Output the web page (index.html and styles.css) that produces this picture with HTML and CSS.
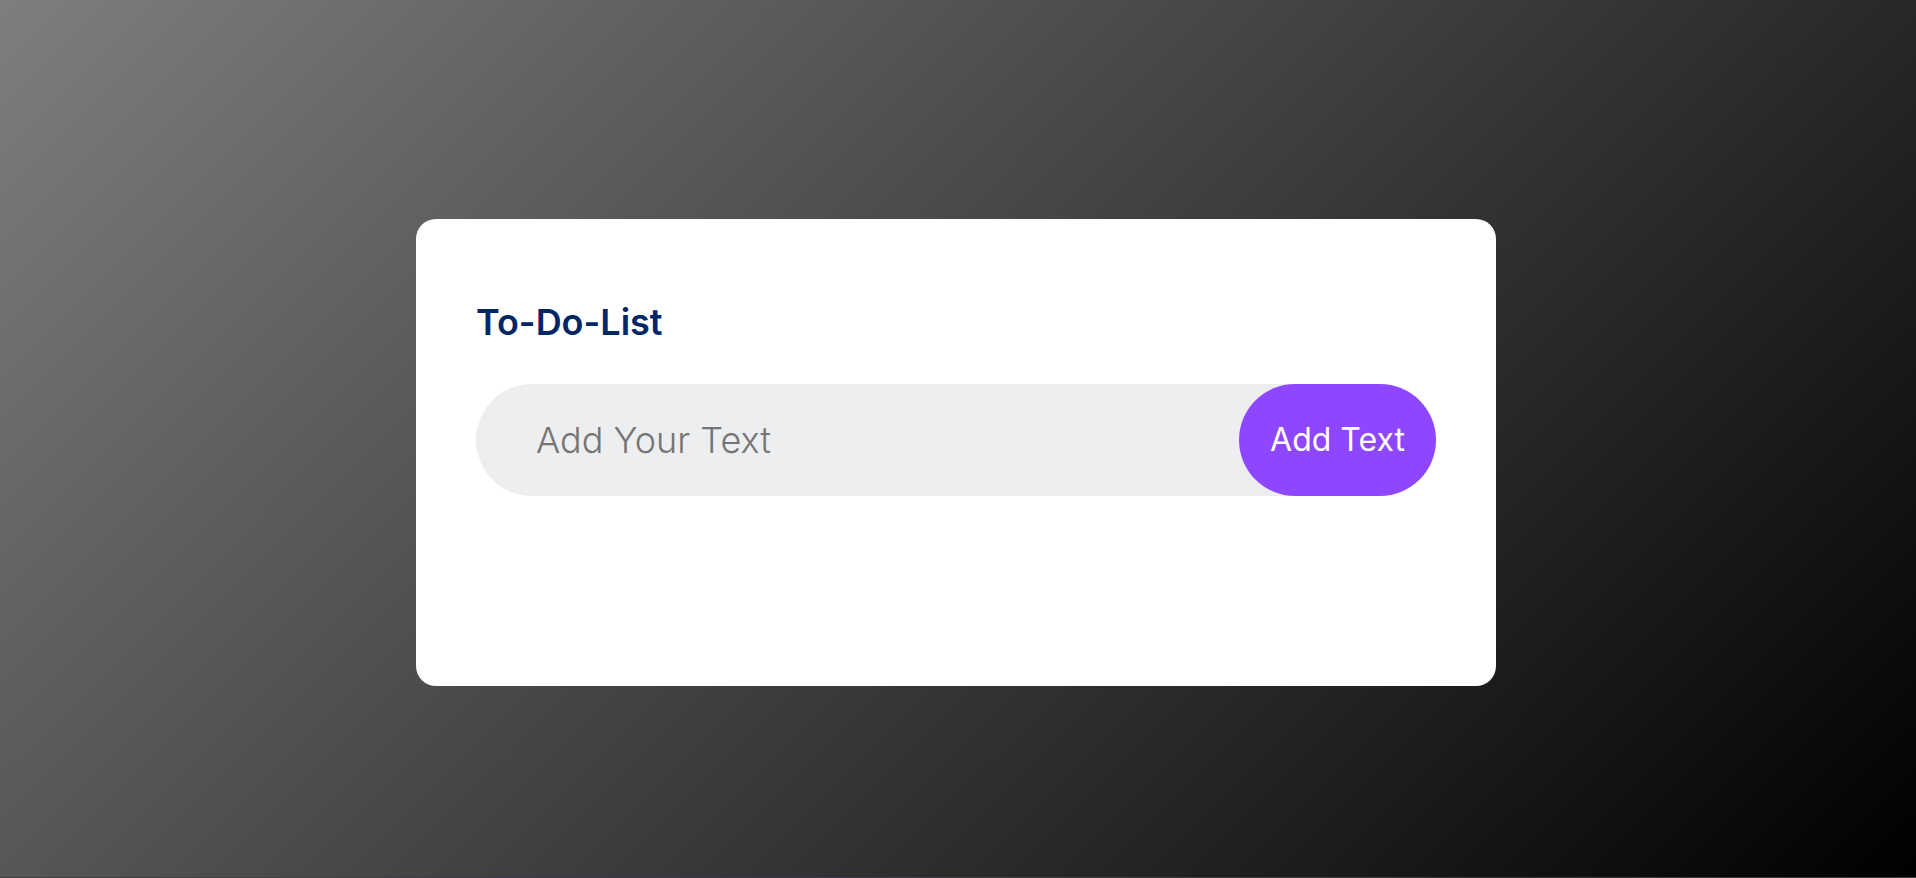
FILE: index.html
```html
<!DOCTYPE html>
<html lang="en">
<head>
<meta charset="utf-8">
<title>To-Do-List</title>
<link rel="stylesheet" href="styles.css">
</head>
<body>
<main class="page">
  <section class="todo">
    <h1 class="todo-title">To-Do-List</h1>
    <form class="todo-form">
      <input class="todo-input" type="text" placeholder="Add Your Text" aria-label="Add Your Text">
      <button class="todo-button" type="button">Add Text</button>
    </form>
  </section>
</main>
<div class="edge"></div>
</body>
</html>
```
FILE: styles.css
```css
* {
  box-sizing: border-box;
  margin: 0;
  padding: 0;
}

body {
  display: flex;
  flex-direction: column;
  min-height: 100vh;
  background: linear-gradient(135deg, #7e7e7e, black);
  font-family: Inter, "Open Sans", sans-serif;
}

.page {
  flex: 1;
  padding: 219px 24px 60px 20px;
}

.todo {
  max-width: 1080px;
  margin: 0 auto;
  padding: 81px 60px 190px;
  background: #fff;
  border-radius: 20px;
}

.todo-title {
  margin-bottom: 40px;
  color: #002765;
  font-size: 36px;
  font-weight: 600;
  line-height: 44px;
}

.todo-form {
  display: flex;
  background: #edeef0;
  border-radius: 56px;
}

.todo-input {
  flex: 1;
  min-width: 0;
  padding: 0 60px;
  border: 0;
  outline: 0;
  background: transparent;
  color: #333;
  font-family: inherit;
  font-size: 36px;
  font-weight: 300;
}

.todo-input::placeholder {
  color: #757575;
  opacity: 1;
}

.todo-button {
  padding: 36px 31px;
  border: 0;
  border-radius: 56px;
  background: #8e46ff;
  color: #fff;
  font-family: inherit;
  font-size: 32px;
  font-weight: 400;
  line-height: 40px;
  cursor: pointer;
}

.edge {
  height: 1px;
  background: linear-gradient(90deg, #443f42 18%, #38384e 28%, #38384e 42%, #403c42 50%, #383838);
}
```
